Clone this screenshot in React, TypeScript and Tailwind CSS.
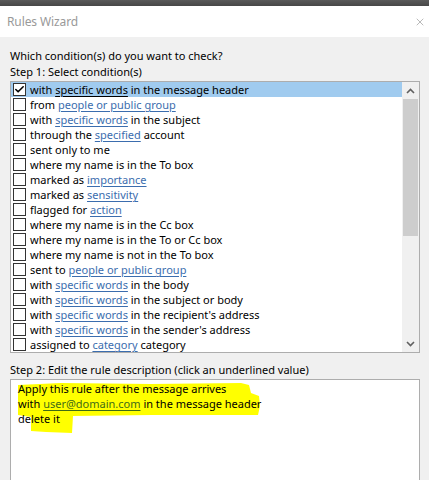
import { Check, X } from "lucide-react"

type Part = { text: string; link?: boolean }

const conditions: Part[][] = [
  [{ text: "with " }, { text: "specific words", link: true }, { text: " in the message header" }],
  [{ text: "from " }, { text: "people or public group", link: true }],
  [{ text: "with " }, { text: "specific words", link: true }, { text: " in the subject" }],
  [{ text: "through the " }, { text: "specified", link: true }, { text: " account" }],
  [{ text: "sent only to me" }],
  [{ text: "where my name is in the To box" }],
  [{ text: "marked as " }, { text: "importance", link: true }],
  [{ text: "marked as " }, { text: "sensitivity", link: true }],
  [{ text: "flagged for " }, { text: "action", link: true }],
  [{ text: "where my name is in the Cc box" }],
  [{ text: "where my name is in the To or Cc box" }],
  [{ text: "where my name is not in the To box" }],
  [{ text: "sent to " }, { text: "people or public group", link: true }],
  [{ text: "with " }, { text: "specific words", link: true }, { text: " in the body" }],
  [{ text: "with " }, { text: "specific words", link: true }, { text: " in the subject or body" }],
  [{ text: "with " }, { text: "specific words", link: true }, { text: " in the recipient's address" }],
  [{ text: "with " }, { text: "specific words", link: true }, { text: " in the sender's address" }],
  [{ text: "assigned to " }, { text: "category", link: true }, { text: " category" }],
]

function Chevron({ down }: { down?: boolean }) {
  return (
    <svg width="9" height="6" viewBox="0 0 9 6" className={down ? "rotate-180" : ""}>
      <path d="M1 5 L4.5 1.5 L8 5" fill="none" stroke="#606060" strokeWidth="1.6" />
    </svg>
  )
}

export default function App() {
  return (
    <div className="h-[480px] w-[429px] overflow-hidden bg-[#f0f0f0] font-['Noto_Sans',sans-serif] text-[11px] leading-[15px] text-black">
      <div className="h-[6px] bg-gradient-to-b from-[#5a5a5a] to-[#474747]" />

      <div className="flex h-[31px] items-center justify-between bg-white pl-[7px] pr-[3px]">
        <span className="text-[12px] tracking-[-0.1px] text-[#999999]">Rules Wizard</span>
        <X className="h-[12px] w-[12px] text-[#8a8a8a]" strokeWidth={1.2} />
      </div>

      <div className="pl-[10px] pr-[9px] pt-[11px]">
        <p>Which condition(s) do you want to check?</p>
        <p className="mt-[1px]">Step 1: Select condition(s)</p>

        <div className="mt-[2px] flex border border-[#adadad] bg-white">
          <ul className="flex-1">
            {conditions.map((parts, i) => (
              <li
                key={i}
                className={`flex h-[15px] items-center gap-[4px] pl-[2px] ${i === 0 ? "bg-[#a0cbef]" : ""}`}
              >
                <span className="flex h-[13px] w-[13px] shrink-0 items-center justify-center border border-[#333333] bg-white">
                  {i === 0 && <Check className="h-[11px] w-[11px] text-black" strokeWidth={3.5} />}
                </span>
                <span className="whitespace-nowrap">
                  {parts.map((p, j) =>
                    p.link ? (
                      <span
                        key={j}
                        className={`underline underline-offset-[2px] ${i === 0 ? "text-black" : "text-[#3b6dae]"}`}
                      >
                        {p.text}
                      </span>
                    ) : (
                      <span key={j}>{p.text}</span>
                    ),
                  )}
                </span>
              </li>
            ))}
          </ul>

          <div className="flex w-[17px] flex-col bg-[#f0f0f0]">
            <div className="flex h-[17px] items-center justify-center">
              <Chevron />
            </div>
            <div className="mx-[1px] h-[137px] bg-[#cdcdcd]" />
            <div className="flex-1" />
            <div className="flex h-[17px] items-center justify-center">
              <Chevron down />
            </div>
          </div>
        </div>

        <p className="mt-[9px]">Step 2: Edit the rule description (click an underlined value)</p>

        <div className="relative mt-[2px] h-[120px] border border-[#adadad] bg-white pl-[7px] pt-[1px]">
          <svg className="absolute left-0 top-0" width="260" height="60" viewBox="0 0 260 60">
            <path
              d="M7 5 L50 3 L140 4 L230 3 L238 5 L240 13 L248 16 L249 26 L247 35 L140 35 L62 36 L61 53 L35 52 L20 51 L20 37 L7 35 Z"
              fill="#ffff00"
            />
          </svg>
          <div className="relative">
            <p>Apply this rule after the message arrives</p>
            <p>
              with <span className="text-[#3f6b17] underline underline-offset-[2px]">user@domain.com</span> in the
              message header
            </p>
            <p>delete it</p>
          </div>
        </div>
      </div>
    </div>
  )
}
